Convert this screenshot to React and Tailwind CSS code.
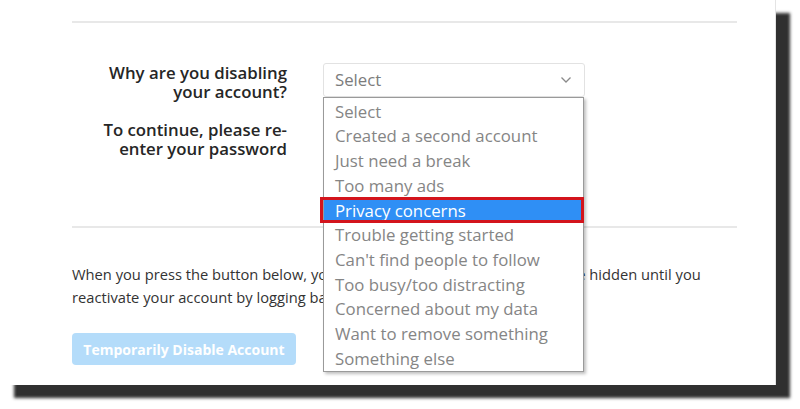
const reasons = [
  "Select",
  "Created a second account",
  "Just need a break",
  "Too many ads",
  "Privacy concerns",
  "Trouble getting started",
  "Can't find people to follow",
  "Too busy/too distracting",
  "Concerned about my data",
  "Want to remove something",
  "Something else",
];

function ChevronDown() {
  return (
    <svg width="12" height="8" viewBox="0 0 12 8" fill="none">
      <path d="M1.5 1.5L6 6l4.5-4.5" stroke="#8a8a8a" strokeWidth="1.3" />
    </svg>
  );
}

export default function App() {
  return (
    <div className="w-[800px] h-[409px] bg-white overflow-hidden font-['Open_Sans',sans-serif]">
      <div className="relative w-[776px] h-[385px] bg-white border-r border-[#e4e4e4] shadow-[14px_13px_3px_rgba(30,30,30,0.92)]">
        <div className="px-[72px] pt-[21px]">
          {/* top divider */}
          <div className="w-[665px] border-t-2 border-[#e8e8e8]"></div>

          {/* form rows */}
          <div className="pt-[40px] h-[203px]">
            <div className="flex">
              <div className="w-[215px] text-right text-[16.8px] leading-[19px] font-semibold text-[#262626]">
                Why are you disabling
                <br />
                your account?
              </div>
              <div className="ml-[36px] w-[262px] h-[34px] border border-[#e2e2e2] rounded-[3px] flex items-center justify-between pl-[11px] pr-[12px]">
                <span className="text-[16.8px] text-[#7c7c7c]">Select</span>
                <ChevronDown />
              </div>
            </div>
            <div className="flex mt-[19px]">
              <div className="w-[215px] text-right text-[16.8px] leading-[19px] font-semibold text-[#262626]">
                To continue, please re-
                <br />
                enter your password
              </div>
            </div>
          </div>

          {/* second divider */}
          <div className="w-[665px] border-t-2 border-[#e8e8e8]"></div>

          <p className="mt-[35px] text-[14.7px] leading-[23px] text-[#333]">
            When you press the button below, your photos, comments and likes will be hidden until you
            <br />
            reactivate your account by logging back in.
          </p>

          <button className="mt-[24px] w-[224px] h-[32px] rounded-[4px] bg-[#b4dcfa] text-white text-[14px] font-bold">
            Temporarily Disable Account
          </button>
        </div>

        {/* open dropdown list */}
        <div className="absolute left-[323px] top-[97px] w-[261px] h-[275px] bg-white border border-[#9a9a9a] shadow-[2px_2px_3px_rgba(0,0,0,0.25)] py-[1px]">
          {reasons.map((r, i) =>
            i === 4 ? (
              <div
                key={r}
                className="relative h-[24.7px] flex items-center pl-[11px] bg-[#2f8ff5] text-white text-[16.8px]"
              >
                <div className="absolute left-[-4px] right-[-1px] top-[-1px] bottom-[-1px] border-[3px] border-[#d3141c]"></div>
                {r}
              </div>
            ) : (
              <div key={r} className="h-[24.7px] flex items-center pl-[11px] text-[16.8px] text-[#858585]">
                {r}
              </div>
            )
          )}
        </div>
      </div>
    </div>
  );
}
